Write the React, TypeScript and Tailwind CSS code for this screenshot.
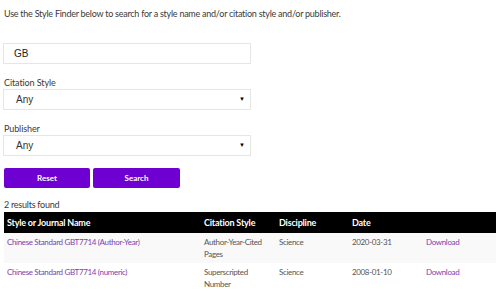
import React from "react";

const rows = [
  { name: "Chinese Standard GBT7714 (Author-Year)", style: ["Author-Year-Cited", "Pages"], disc: "Science", date: "2020-03-31", bg: "bg-[#f9f9f9]" },
  { name: "Chinese Standard GBT7714 (numeric)", style: ["Superscripted", "Number"], disc: "Science", date: "2008-01-10", bg: "bg-white" },
];

function Select() {
  return (
    <div className="flex items-center justify-between w-[248px] h-[21px] border border-[#e6e6e6] bg-white pl-[12px] pr-[5px] text-[10px] text-[#333] font-['Liberation_Sans',sans-serif]">
      <span>Any</span>
      <span className="text-[6px] text-black">▼</span>
    </div>
  );
}

export default function App() {
  return (
    <div className="w-[499px] h-[292px] overflow-hidden bg-white text-[#3a3a3a] font-['Lato',sans-serif]">
      <div className="pt-[8px] pl-[4px] text-[9px] leading-[12px] tracking-[-0.25px]">
        Use the Style Finder below to search for a style name and/or citation style and/or publisher.
      </div>
      <div className="pl-[3px] mt-[23px]">
        <div className="flex items-center w-[248px] h-[21px] border border-[#e6e6e6] bg-white pl-[10px] text-[10px] text-[#222] font-['Liberation_Sans',sans-serif]">
          GB
        </div>
        <div className="mt-[13px] pl-[1px] text-[9px] leading-[12px] tracking-[-0.1px]">Citation Style</div>
        <Select />
        <div className="mt-[13px] pl-[1px] text-[9px] leading-[12px] tracking-[-0.1px]">Publisher</div>
        <Select />
        <div className="flex gap-[3px] mt-[12px] pl-[1px]">
          <button className="w-[86px] h-[20px] rounded-[2px] bg-[#6f00d2] text-white text-[8px] font-bold">Reset</button>
          <button className="w-[87px] h-[20px] rounded-[2px] bg-[#6f00d2] text-white text-[8px] font-bold">Search</button>
        </div>
      </div>
      <div className="mt-[11px] pl-[4px] text-[9px] leading-[12px] tracking-[-0.25px]">2 results found</div>
      <div className="ml-[4px] w-[492px] mt-[1px]">
        <div className="flex items-center h-[21px] bg-black text-white text-[9px] font-bold tracking-[-0.2px]">
          <div className="w-[200px] pl-[3px]">Style or Journal Name</div>
          <div className="w-[75px]">Citation Style</div>
          <div className="w-[73px]">Discipline</div>
          <div className="w-[74px]">Date</div>
          <div className="flex-1"></div>
        </div>
        {rows.map((r) => (
          <div key={r.name} className={`flex items-start h-[30px] pt-[3px] text-[8px] leading-[12px] tracking-[-0.35px] ${r.bg}`}>
            <div className="w-[200px] pl-[3px] text-[#7b3fb2]">{r.name}</div>
            <div className="w-[75px] text-[#555]">
              <div>{r.style[0]}</div>
              <div>{r.style[1]}</div>
            </div>
            <div className="w-[73px] text-[#555]">{r.disc}</div>
            <div className="w-[74px] text-[#555]">{r.date}</div>
            <div className="flex-1 text-[#7b3fb2]">Download</div>
          </div>
        ))}
      </div>
    </div>
  );
}
